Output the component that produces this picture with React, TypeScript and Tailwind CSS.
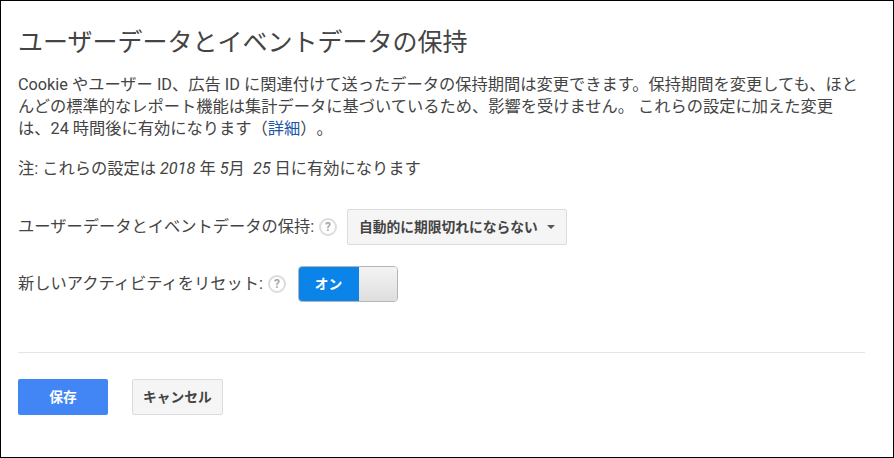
import React from 'react';

const fontStack = "font-['Roboto','Noto_Sans_CJK_JP',sans-serif]";

const HelpIcon = () => (
    <span className="flex h-[18px] w-[18px] shrink-0 items-center justify-center rounded-full border-2 border-[#dcdcdc] text-[12px] font-bold leading-none text-[#a8a8a8]">
        ?
    </span>
);

const App = () => {
    return (
        <div className={`${fontStack} h-[458px] w-[894px] overflow-hidden border border-black bg-white px-[17px] text-[#444444] [text-spacing-trim:space-all]`}>
            <h1 className="mt-[24px] text-[25px] leading-[36px] font-normal text-[#444444]">
                ユーザーデータとイベントデータの保持
            </h1>

            <p className="mt-[13px] w-[845px] text-[16.25px] leading-[22px]">
                Cookie やユーザー ID、広告 ID に関連付けて送ったデータの保持期間は変更できます。保持期間を変更しても、ほとんどの標準的なレポート機能は集計データに基づいているため、影響を受けません。 これらの設定に加えた変更は、24 時間後に有効になります（<a href="#" className="text-[#1a56a8]">詳細</a>）。
            </p>

            <p className="mt-[17px] text-[16.25px] leading-[24px]">
                注: これらの設定は <em>2018</em> 年 <em>5</em>月&nbsp;&nbsp;<em>25&nbsp;</em>日に有効になります
            </p>

            <div className="mt-[28px] flex items-center gap-[5px]">
                <span className="text-[16.25px]">ユーザーデータとイベントデータの保持:</span>
                <HelpIcon />
                <button className="ml-[5px] flex h-[36px] w-[220px] items-center justify-between rounded-[2px] border border-[#dcdcdc] bg-[#f5f5f5] px-[11px] text-[13.75px] font-bold text-[#444444]">
                    自動的に期限切れにならない
                    <span className="h-0 w-0 border-x-[4px] border-t-[4px] border-x-transparent border-t-[#555555]" />
                </button>
            </div>

            <div className="mt-[21px] flex items-center gap-[5px]">
                <span className="text-[16.25px]">新しいアクティビティをリセット:</span>
                <HelpIcon />
                <div className="ml-[7px] flex h-[36px] w-[100px] overflow-hidden rounded-[4px] border border-[#b5b5b5]">
                    <div className="-my-px -ml-px flex w-[61px] items-center justify-center bg-[#0a84e8] text-[13.75px] font-bold text-white">
                        オン
                    </div>
                    <div className="flex-1 bg-gradient-to-b from-[#f4f4f4] to-[#dedede]" />
                </div>
            </div>

            <div className="mt-[50px] w-[847px] border-t border-[#e5e5e5]" />

            <div className="mt-[26px] flex gap-[24px]">
                <button className="h-[36px] w-[90px] rounded-[2px] bg-[#4285f4] text-[13.75px] font-bold text-white">
                    保存
                </button>
                <button className="h-[36px] w-[91px] rounded-[2px] border border-[#dcdcdc] bg-[#f5f5f5] text-[13.75px] font-bold text-[#444444]">
                    キャンセル
                </button>
            </div>
        </div>
    );
};

export default App;
